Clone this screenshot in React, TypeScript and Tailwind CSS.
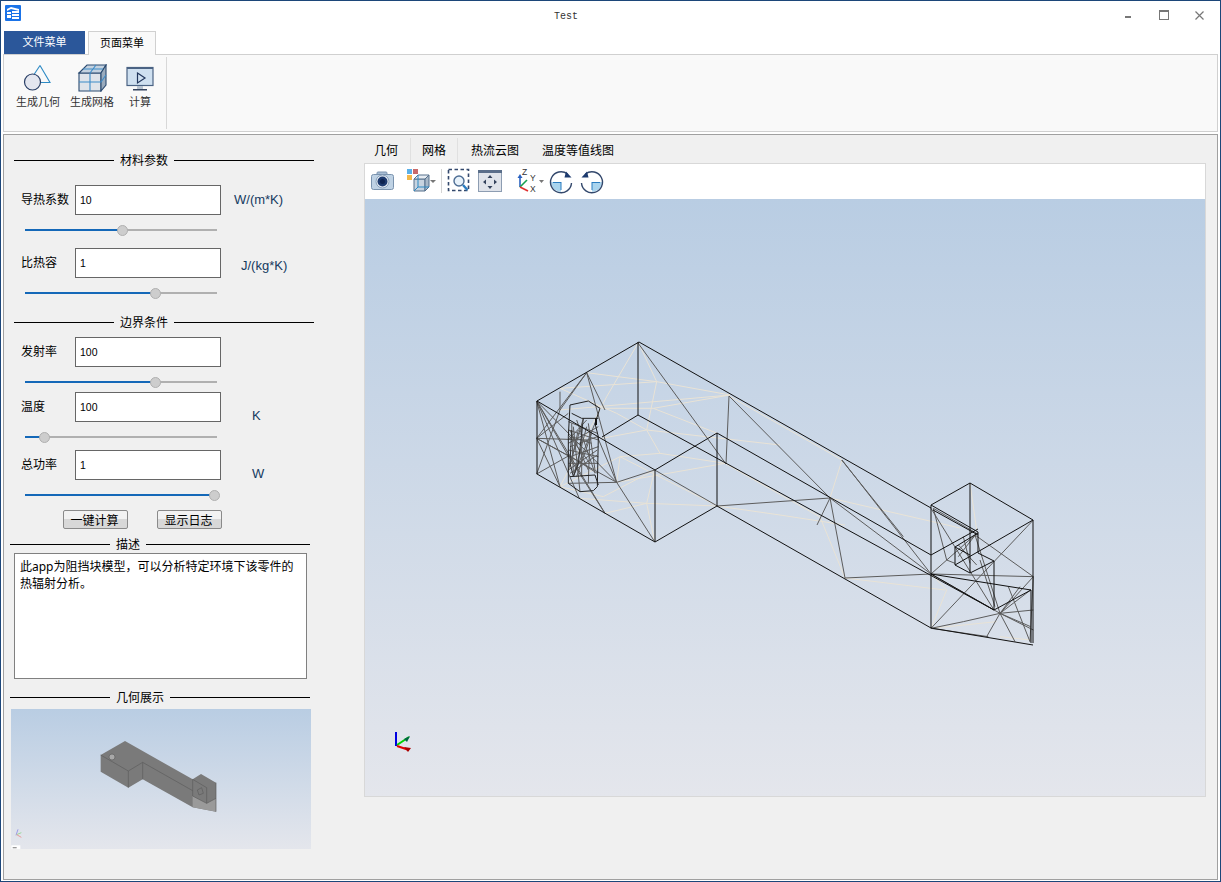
const CJK = "font-['Liberation_Sans','Noto_Sans_CJK_SC',sans-serif]";

type Seg = [number, number, number, number];

function Lines({ segs, color, w = 1 }: { segs: Seg[]; color: string; w?: number }) {
  return (
    <>
      {segs.map((s, i) => (
        <line key={i} x1={s[0]} y1={s[1]} x2={s[2]} y2={s[3]} stroke={color} strokeWidth={w} vectorEffect="non-scaling-stroke" />
      ))}
    </>
  );
}

const black: Seg[] = [
  [537, 401, 639, 342], [639, 342, 931, 508], [537, 401, 655, 470], [537, 401, 537, 474],
  [537, 474, 655, 542], [655, 470, 655, 542], [655, 470, 717, 433], [655, 542, 717, 506],
  [717, 433, 717, 506], [638, 342, 638, 415], [638, 415, 602, 437], [638, 415, 994, 610],
  [717, 433, 931, 555], [717, 506, 931, 628],
  [931, 505, 970, 483], [970, 483, 1033, 520], [1033, 520, 1033, 643], [1033, 645, 931, 628],
  [931, 505, 931, 628], [970, 483, 970, 573], [931, 555, 978, 529], [955, 565, 1033, 520],
  [931, 505, 978, 532], [933, 510, 978, 535], [978, 532, 978, 553], [955, 547, 978, 533], [955, 547, 955, 565],
  [955, 565, 970, 573], [970, 573, 994, 561], [994, 561, 994, 610], [978, 553, 994, 561], [955, 547, 970, 555],
  [994, 610, 1031, 590], [1031, 590, 1031, 643], [931, 574, 1031, 590], [931, 574, 994, 610],
];

const midGray: Seg[] = [
  [729, 396, 830, 498], [842, 460, 931, 574], [638, 343, 726, 464], [729, 396, 726, 464],
  [717, 506, 830, 498], [830, 498, 845, 578], [830, 498, 817, 525], [830, 498, 931, 574],
  [845, 578, 931, 574],
];

const midCream: Seg[] = [
  [647, 430, 780, 445], [717, 506, 780, 515], [780, 515, 845, 525], [729, 396, 842, 460], [726, 464, 820, 517],
  [820, 517, 845, 578], [842, 460, 830, 498], [845, 578, 945, 590], [830, 498, 960, 528],
];

const z5Gray: Seg[] = [
  [50, 213, 290, 457], [50, 213, 255, 550], [50, 213, 178, 505], [50, 213, 120, 470], [50, 213, 145, 378],
  [50, 325, 145, 250], [50, 325, 200, 128], [50, 325, 290, 457], [50, 325, 150, 380], [50, 325, 120, 470], [50, 325, 205, 330],
  [50, 432, 145, 378], [50, 432, 120, 240], [120, 185, 120, 240],
  [200, 128, 290, 457], [200, 128, 120, 240], [200, 128, 255, 240],
  [404, 420, 592, 528], [404, 420, 290, 457],
  [404, 635, 290, 457], [290, 457, 145, 460], [232, 320, 290, 457], [255, 550, 145, 378],
  [145, 300, 235, 330], [145, 340, 235, 290], [150, 380, 235, 350], [145, 400, 235, 400], [160, 440, 200, 290],
  [190, 265, 145, 420], [225, 280, 160, 440], [170, 270, 225, 430], [150, 300, 205, 420], [145, 360, 235, 380],
  [185, 290, 185, 440], [210, 300, 205, 460], [155, 320, 215, 340], [145, 420, 232, 360], [160, 290, 180, 485],
  [145, 275, 232, 310], [145, 330, 200, 270], [150, 350, 232, 320], [145, 375, 232, 430], [150, 430, 232, 375],
  [155, 280, 160, 430], [205, 280, 225, 420], [175, 300, 150, 410], [215, 310, 170, 440], [145, 315, 210, 400],
];

const z5Cream: Seg[] = [
  [355, 38, 410, 155], [410, 155, 380, 300], [355, 38, 260, 200], [260, 200, 120, 470],
  [200, 128, 410, 155], [410, 155, 630, 195], [120, 175, 410, 155], [120, 240, 630, 195], [245, 235, 400, 235],
  [400, 235, 592, 310], [380, 300, 420, 370], [420, 370, 615, 400], [630, 195, 400, 235],
  [290, 457, 615, 400], [300, 380, 592, 528], [255, 550, 380, 520], [380, 520, 592, 528], [404, 420, 380, 520],
  [380, 520, 404, 635], [120, 470, 300, 380], [300, 380, 420, 370], [180, 505, 380, 520],
  [245, 325, 380, 300], [120, 175, 290, 250], [290, 250, 380, 300], [300, 380, 290, 457], [120, 470, 250, 500],
  [250, 500, 404, 420],
];

const z6Gray: Seg[] = [
  [333, 175, 522, 480], [333, 372, 465, 255], [333, 372, 640, 380],
  [65, 30, 250, 260],
  [333, 535, 640, 210], [333, 535, 430, 515], [430, 515, 540, 490], [540, 490, 640, 480], [640, 380, 540, 490],
  [340, 175, 380, 330], [380, 330, 405, 340], [540, 490, 500, 560], [540, 490, 585, 575], [565, 410, 630, 575],
  [640, 380, 630, 575], [465, 255, 540, 490], [480, 330, 525, 470], [333, 372, 540, 490],
  [340, 175, 470, 250], [415, 285, 470, 345], [430, 260, 450, 340], [470, 250, 415, 320], [465, 255, 640, 380],
  [540, 490, 632, 530], [540, 490, 640, 540], [600, 410, 540, 490], [632, 420, 540, 490], [333, 535, 505, 560],
];

const z6Cream: Seg[] = [
  [450, 100, 470, 240], [333, 535, 380, 420], [380, 420, 333, 372], [333, 535, 530, 515], [540, 560, 632, 570],
];

function Wire() {
  return (
    <svg viewBox="365 199 840 597" className="block w-[840px] h-[597px]">
      <Lines segs={midCream} color="#e9e3d6" />
      <g transform="translate(520 330) scale(0.33333)">
        <Lines segs={z5Cream} color="#e9e3d6" />
        <Lines segs={z5Gray} color="#5c5c5c" />
        <polygon points="150,225 205,213 240,235 225,280 235,320 232,470 220,482 180,485 145,460 145,320" fill="none" stroke="#222" strokeWidth={1} vectorEffect="non-scaling-stroke" />
        <polyline points="155,250 185,265 235,265" fill="none" stroke="#222" strokeWidth={1} vectorEffect="non-scaling-stroke" />
        <polyline points="150,440 225,435 235,465" fill="none" stroke="#222" strokeWidth={1} vectorEffect="non-scaling-stroke" />
        <polyline points="155,300 150,400 160,440" fill="none" stroke="#333" strokeWidth={1} vectorEffect="non-scaling-stroke" />
        <polyline points="190,265 175,400 160,440" fill="none" stroke="#333" strokeWidth={1} vectorEffect="non-scaling-stroke" />
        <line x1={228} y1={265} x2={228} y2={285} stroke="#111" strokeWidth={2} vectorEffect="non-scaling-stroke" />
      </g>
      <g transform="translate(820 450) scale(0.33333)">
        <Lines segs={z6Cream} color="#e9e3d6" />
        <Lines segs={z6Gray} color="#5c5c5c" />
      </g>
      <Lines segs={midGray} color="#5c5c5c" />
      <Lines segs={black} color="#111" />
      <line x1={396} y1={746} x2={396} y2={732} stroke="#0000e0" strokeWidth={2} />
      <line x1={397} y1={745} x2={409} y2={737} stroke="#00d000" strokeWidth={2} />
      <line x1={397} y1={746} x2={409} y2={750} stroke="#e00000" strokeWidth={2} />
      <polygon points="404,739 410,736 407,742" fill="#064" />
      <polygon points="404,747 411,748 408,752" fill="#a00" />
    </svg>
  );
}

function Thumb() {
  return (
    <svg viewBox="33 57 900 420" className="block w-[300px] h-[140px]">
      <polygon points="302,195 375,153 578,268 603,252 648,278 648,365 578,352 428,268 385,293 302,245" fill="#7a7a7a" />
      <polygon points="578,318 620,340 648,325 648,365 578,352" fill="#9a9a9a" />
      <g fill="none" stroke="#5c5c5c" strokeWidth={2}>
        <polyline points="302,195 385,243 428,217 578,302" />
        <line x1={385} y1={243} x2={385} y2={293} />
        <line x1={428} y1={217} x2={428} y2={268} />
        <polyline points="578,268 578,318 620,340 648,325" />
        <polyline points="578,268 620,293 620,340" />
        <polygon points="592,300 605,293 610,310 597,315" />
        <line x1={648} y1={278} x2={648} y2={365} />
      </g>
      <circle cx={336} cy={201} r={9} fill="#a8a8a8" stroke="#5c5c5c" strokeWidth={2} />
      <line x1={48} y1={436} x2={54} y2={418} stroke="#9a9ae8" strokeWidth={3} />
      <line x1={50} y1={434} x2={64} y2={428} stroke="#9ad89a" strokeWidth={3} />
      <line x1={50} y1={434} x2={64} y2={442} stroke="#e89a9a" strokeWidth={3} />
      <rect x={34} y={466} width={27} height={11} fill="#fff" />
      <rect x={38} y={471} width={12} height={4} fill="#999" />
    </svg>
  );
}

function Slider({ pct }: { pct: number }) {
  return (
    <div className="relative w-[192px] h-[14px] ml-[21px] flex items-center">
      <div className="w-full h-[2px] bg-[#b0b0b0] flex">
        <div className="h-full bg-[#1468b8]" style={{ width: pct + "px" }} />
      </div>
      <div className="absolute top-[2px] w-[11px] h-[11px] rounded-full bg-[#cdcdcd] border border-[#b0b0b0]" style={{ left: pct - 5 + "px" }} />
    </div>
  );
}

function Heading({ text, inset, mt, textW }: { text: string; inset: number; mt: string; textW: number }) {
  return (
    <div className={`flex items-center h-[20px] w-[300px] ${mt}`} style={{ marginLeft: inset }}>
      <div className="w-[100px] h-px bg-black" />
      <div className="text-[12px] text-black text-center pt-[2px]" style={{ width: textW }}>{text}</div>
      <div className="flex-1 h-px bg-black" />
    </div>
  );
}

function Field({ label, value, unit, unitMl, unitMt, mt }: { label: string; value: string; unit?: string; unitMl?: string; unitMt?: string; mt: string }) {
  return (
    <div className={`flex items-center h-[30px] pl-[17px] ${mt}`}>
      <div className="w-[54px] text-[12px] leading-[14px] text-black">{label}</div>
      <div className="w-[146px] h-[30px] border border-[#666] bg-white flex items-center pl-[4px] pt-[2px] text-[10.5px] text-black">{value}</div>
      {unit && <div className={`text-[13px] text-[#143a60] ${unitMl} ${unitMt}`}>{unit}</div>}
    </div>
  );
}

function Btn({ text, ml }: { text: string; ml: string }) {
  return (
    <div className={`w-[65px] h-[19px] border border-[#8a8a8a] rounded-[2px] bg-linear-to-b from-[#f2f2f2] from-50% to-[#d8d8d8] to-50% flex items-center justify-center pt-[2px] pr-[2px] text-[12px] text-black ${ml}`}>
      {text}
    </div>
  );
}

function Toolbar() {
  return (
    <div className="h-[35px] bg-white flex items-start">
      <svg viewBox="370 165 26 34" className="w-[26px] h-[34px] ml-[5px]">
        <rect x={377} y={173} width={10} height={4} rx={1} fill="#a8bdd4" stroke="#7a93ae" />
        <rect x={371.5} y={175.5} width={22} height={15} rx={2} fill="#bfd2e4" stroke="#7a93ae" />
        <circle cx={382.5} cy={182.5} r={6.5} fill="#e8eef5" stroke="#8ba2bb" />
        <circle cx={382.5} cy={182.5} r={5} fill="#1d3a6e" />
        <circle cx={382.5} cy={182.5} r={2.5} fill="#0e2350" />
      </svg>
      <svg viewBox="405 165 32 34" className="w-[32px] h-[34px] ml-[9px]">
        <rect x={407} y={170} width={5} height={5} fill="#5ab0e8" />
        <rect x={413} y={170} width={5} height={5} fill="#c96a6a" />
        <rect x={407} y={176} width={5} height={5} fill="#f2b84b" />
        <path d="M414 180 h11 v12 h-11 z" fill="#c8d4e0" stroke="#56708c" />
        <path d="M414 180 l4 -4 h11 l-4 4 z" fill="#e6ecf2" stroke="#56708c" />
        <path d="M425 180 l4 -4 v12 l-4 4 z" fill="#a8b8c8" stroke="#56708c" />
        <path d="M414 192 l4 -4 h11 M418 176 v12" fill="none" stroke="#2d8ac4" />
        <polygon points="430,181 436,181 433,184" fill="#777" />
      </svg>
      <div className="w-px h-[24px] mt-[5px] ml-[4px] bg-[#d4d4d4]" />
      <svg viewBox="446 165 25 34" className="w-[25px] h-[34px] ml-[4px]">
        <rect x={448.5} y={170.5} width={20} height={21} fill="none" stroke="#33486c" strokeWidth={1.6} strokeDasharray="3.5 2.5" />
        <circle cx={459} cy={182} r={5} fill="#e8f2fa" stroke="#4d6d94" strokeWidth={1.4} />
        <line x1={463} y1={186} x2={467.5} y2={191} stroke="#2a7cc0" strokeWidth={2.4} />
      </svg>
      <svg viewBox="477 165 26 34" className="w-[26px] h-[34px] ml-[6px]">
        <rect x={478.5} y={171.5} width={23} height={21} fill="#dfe3ea" stroke="#8d9db2" />
        <rect x={478} y={171} width={24} height={3} fill="#5a6e8a" />
        <path d="M490 176 l-2.5 3 h5 z M490 190 l-2.5 -3 h5 z M483 183 l3 -2.5 v5 z M497 183 l-3 -2.5 v5 z" fill="#33425c" />
      </svg>
      <svg viewBox="516 165 30 34" className="w-[30px] h-[34px] ml-[13px]">
        <line x1={520} y1={188} x2={520} y2={178} stroke="#2a62c0" strokeWidth={1.6} />
        <polygon points="520,175 517.5,179 522.5,179" fill="#2a62c0" />
        <line x1={520} y1={188} x2={527} y2={181} stroke="#18a050" strokeWidth={1.6} />
        <line x1={520} y1={188} x2={528} y2={192} stroke="#e03030" strokeWidth={1.6} />
        <text x={522} y={176} fontSize={8.5} fill="#333" fontFamily="Liberation Sans">Z</text>
        <text x={530} y={182} fontSize={8.5} fill="#333" fontFamily="Liberation Sans">Y</text>
        <text x={530} y={193} fontSize={8.5} fill="#333" fontFamily="Liberation Sans">X</text>
        <polygon points="539,181 544,181 541.5,184" fill="#777" />
      </svg>
      <svg viewBox="549 165 25 34" className="w-[25px] h-[34px] ml-[3px]">
        <path d="M561 183 h-10 a10 10 0 0 0 8 9.8 L561 192.8 z" fill="#a9d4ee" />
        <rect x={553} y={183} width={8} height={1} fill="#2a7cc0" />
        <rect x={560.5} y={183} width={1} height={8} fill="#2a7cc0" />
        <path d="M567.5 175 A10.5 10.5 0 1 0 571.5 184" fill="none" stroke="#33486c" strokeWidth={1.4} />
        <polygon points="566,172.5 571.5,178.5 564.5,178.5" fill="#1d3a6e" />
      </svg>
      <svg viewBox="580 165 25 34" className="w-[25px] h-[34px] ml-[6px]">
        <path d="M592 183 h10 a10 10 0 0 1 -8 9.8 L592 192.8 z" fill="#a9d4ee" />
        <rect x={592} y={183} width={8} height={1} fill="#2a7cc0" />
        <rect x={591.5} y={183} width={1} height={8} fill="#2a7cc0" />
        <path d="M585.5 175 A10.5 10.5 0 1 1 581.5 184" fill="none" stroke="#33486c" strokeWidth={1.4} />
        <polygon points="587,172.5 581.5,178.5 588.5,178.5" fill="#1d3a6e" />
      </svg>
    </div>
  );
}

export default function App() {
  return (
    <div className={`${CJK} w-[1221px] h-[882px] bg-white border border-[#1c4679] flex flex-col overflow-hidden`}>
      <div className="h-[30px] flex items-start shrink-0">
        <svg viewBox="0 0 16 16" className="w-[16px] h-[16px] mt-[4px] ml-[4px]">
          <rect width={16} height={16} rx={1} fill="#1a73e8" />
          <path d="M2 4 l4 -2 l8 2 v2 l-8 -2 l-4 2 z M2 7 h4 v2 h-4 z M7 6 h7 v2 h-7 z M2 10 h4 v3 h-4 z M7 9 h7 v2 h-7 z M7 12 h7 v2 h-7 z" fill="#fff" />
        </svg>
        <div className="ml-[533px] mt-[10px] w-[40px] text-[10px] leading-[12px] text-[#333] font-['Liberation_Mono',monospace]">Test</div>
        <div className="flex-1" />
        <svg width="10" height="10" viewBox="0 0 10 10" className="mt-[10px] mr-[26px]">
          <rect x={2} y={5} width={6} height={2} fill="#777" />
        </svg>
        <svg width="10" height="10" viewBox="0 0 10 10" className="mt-[9px] mr-[26px]">
          <rect x={0.5} y={0.5} width={9} height={9} fill="none" stroke="#777" />
          <rect x={0} y={0} width={10} height={2} fill="#777" />
        </svg>
        <svg width="9" height="9" viewBox="0 0 9 9" className="mt-[10px] mr-[16px]">
          <path d="M0.5 0.5 L8.5 8.5 M8.5 0.5 L0.5 8.5" stroke="#777" strokeWidth={1.2} />
        </svg>
      </div>
      <div className="h-[23px] flex items-end pl-[3px] shrink-0">
        <div className="w-[81px] h-[23px] bg-[#2b579a] text-white text-[11px] flex items-center justify-center">文件菜单</div>
        <div className="w-[68px] h-[24px] -mb-px ml-[3px] relative z-10 bg-[#f9f9f9] border border-b-0 border-[#d0d0d0] text-black text-[11px] flex items-center justify-center">页面菜单</div>
      </div>
      <div className="h-[78px] mx-[2px] bg-[#f9f9f9] border border-[#d0d0d0] flex shrink-0">
        <div className="flex pl-[7px] pt-[9px]">
          <div className="w-[54px] flex flex-col items-center">
            <svg viewBox="24 64 30 28" className="w-[30px] h-[28px]">
              <path d="M41 65.5 L51 82.5 L38 82.5" fill="none" stroke="#2d8ac4" strokeWidth={1.1} />
              <line x1={41} y1={65.5} x2={34} y2={76} stroke="#2d8ac4" strokeWidth={1.1} />
              <circle cx={33.5} cy={82} r={8} fill="#e3e6ef" stroke="#2a3f66" strokeWidth={1.2} />
            </svg>
            <div className="text-[11px] leading-[14px] mt-[3px] text-[#333]">生成几何</div>
          </div>
          <div className="w-[54px] flex flex-col items-center">
            <svg viewBox="77 64 30 28" className="w-[30px] h-[28px]">
              <path d="M79 73 h22 v18 h-22 z" fill="#dfe4ea" stroke="#2a4a70" strokeWidth={1.1} />
              <path d="M79 73 l8 -8 h19 l-5 8 z" fill="#c4d2e0" stroke="#2a4a70" strokeWidth={1.1} />
              <path d="M101 73 l5 -8 v20 l-5 6 z" fill="#9aabbd" stroke="#2a4a70" strokeWidth={1.1} />
              <path d="M90 73 v18 M79 82 h22 M101 82 l5 -7 M90 73 l6 -8 M83 69 h20" fill="none" stroke="#3d8cc8" strokeWidth={1.1} />
            </svg>
            <div className="text-[11px] leading-[14px] mt-[3px] text-[#333]">生成网格</div>
          </div>
          <div className="w-[42px] flex flex-col items-center">
            <svg viewBox="125 64 30 28" className="w-[30px] h-[28px]">
              <rect x={127} y={67.5} width={26} height={18} fill="#cfe0f0" stroke="#4b6384" strokeWidth={1.2} />
              <rect x={127} y={67} width={26} height={2} fill="#4b6384" />
              <path d="M137.5 73 L145 78 L137.5 83 Z" fill="none" stroke="#22365c" strokeWidth={1.2} />
              <rect x={137} y={86} width={6} height={3} fill="#b8c4d0" />
              <rect x={133} y={89} width={14} height={1.5} fill="#33435e" />
            </svg>
            <div className="text-[11px] leading-[14px] mt-[3px] text-[#333]">计算</div>
          </div>
        </div>
        <div className="w-px bg-[#d8d8d8] ml-[5px] my-[2px]" />
      </div>
      <div className="h-[746px] mt-[2px] mx-[2px] bg-[#f0f0f0] border border-[#a0a0a0] flex shrink-0">
        <div className="w-[359px] pt-[15px] flex flex-col">
          <Heading text="材料参数" inset={10} mt="" textW={60} />
          <Field label="导热系数" value="10" unit="W/(m*K)" unitMl="ml-[13px]" mt="mt-[15px]" />
          <div className="mt-[8px]"><Slider pct={97} /></div>
          <Field label="比热容" value="1" unit="J/(kg*K)" unitMl="ml-[20px]" unitMt="mt-[6px]" mt="mt-[11px]" />
          <div className="mt-[8px]"><Slider pct={130} /></div>
          <Heading text="边界条件" inset={10} mt="mt-[12px]" textW={60} />
          <Field label="发射率" value="100" mt="mt-[5px]" />
          <div className="mt-[8px]"><Slider pct={130} /></div>
          <Field label="温度" value="100" unit="K" unitMl="ml-[31px]" unitMt="mt-[18px]" mt="mt-[3px]" />
          <div className="mt-[8px]"><Slider pct={19} /></div>
          <Field label="总功率" value="1" unit="W" unitMl="ml-[31px]" unitMt="mt-[18px]" mt="mt-[6px]" />
          <div className="mt-[8px]"><Slider pct={189} /></div>
          <div className="flex mt-[8px]">
            <Btn text="一键计算" ml="ml-[59px]" />
            <Btn text="显示日志" ml="ml-[29px]" />
          </div>
          <Heading text="描述" inset={6} mt="mt-[5px]" textW={36} />
          <div className="w-[293px] h-[126px] -mt-px ml-[10px] bg-white border border-[#808080] px-[5px] py-[4px] text-[12px] leading-[17px] text-black font-['Noto_Sans','Noto_Sans_CJK_SC',sans-serif]">
            此app为阻挡块模型，可以分析特定环境下该零件的热辐射分析。
          </div>
          <Heading text="几何展示" inset={6} mt="mt-[8px]" textW={60} />
          <div className="w-[300px] h-[140px] mt-[2px] ml-[7px] bg-linear-to-b from-[#b9cde3] to-[#e4e6ec]">
            <Thumb />
          </div>
        </div>
        <div className="flex-1 flex flex-col">
          <div className="h-[28px] flex text-[12px] text-black items-center pt-[3px] shrink-0">
            <div className="w-[48px] h-full flex items-center pl-[11px] border-r border-[#e0e0e0]">几何</div>
            <div className="w-[47px] h-full flex items-center pl-[11px] border-r border-[#e0e0e0]">网格</div>
            <div className="ml-[13px]">热流云图</div>
            <div className="ml-[23px]">温度等值线图</div>
          </div>
          <div className="w-[842px] h-[634px] ml-px border border-[#d8d8d8] flex flex-col">
            <Toolbar />
            <div className="h-[597px] bg-linear-to-b from-[#b9cde3] to-[#e4e6ec]">
              <Wire />
            </div>
          </div>
        </div>
      </div>
    </div>
  );
}
